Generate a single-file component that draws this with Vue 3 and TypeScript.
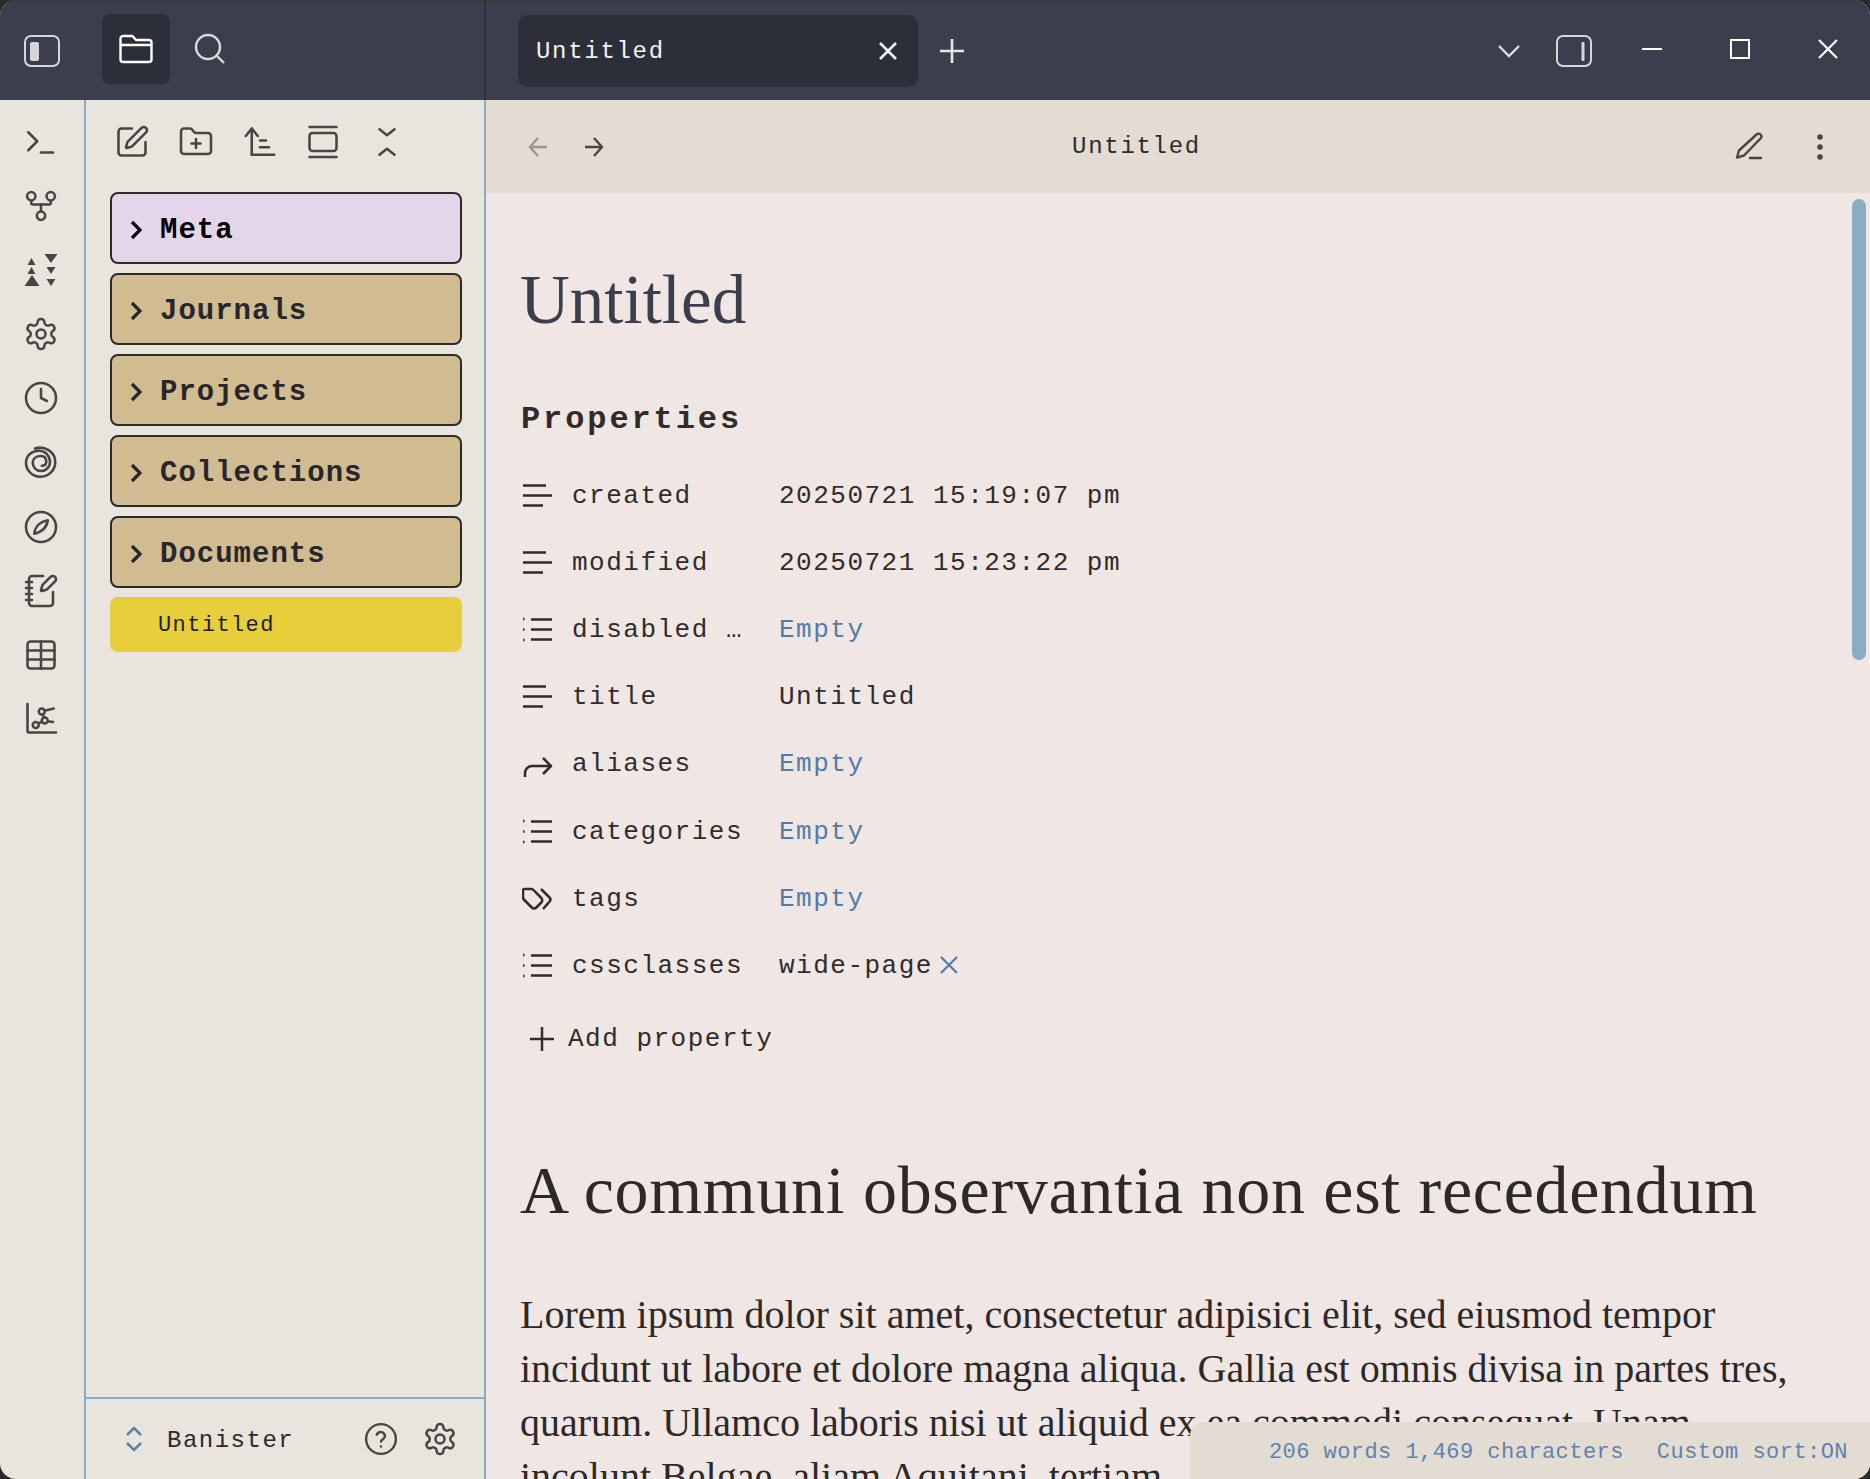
<script setup lang="ts">
const c = (x: number, y: number, r: number) => `M${x - r} ${y}a${r} ${r} 0 1 0 ${2 * r} 0a${r} ${r} 0 1 0 ${-2 * r} 0`
const gear = 'M12.22 2h-.44a2 2 0 0 0-2 2v.18a2 2 0 0 1-1 1.73l-.43.25a2 2 0 0 1-2 0l-.15-.08a2 2 0 0 0-2.73.73l-.22.38a2 2 0 0 0 .73 2.73l.15.1a2 2 0 0 1 1 1.72v.51a2 2 0 0 1-1 1.74l-.15.09a2 2 0 0 0-.73 2.73l.22.38a2 2 0 0 0 2.73.73l.15-.08a2 2 0 0 1 2 0l.43.25a2 2 0 0 1 1 1.73V20a2 2 0 0 0 2 2h.44a2 2 0 0 0 2-2v-.18a2 2 0 0 1 1-1.73l.43-.25a2 2 0 0 1 2 0l.15.08a2 2 0 0 0 2.73-.73l.22-.39a2 2 0 0 0-.73-2.73l-.15-.08a2 2 0 0 1-1-1.74v-.5a2 2 0 0 1 1-1.74l.15-.09a2 2 0 0 0 .73-2.73l-.22-.38a2 2 0 0 0-2.73-.73l-.15.08a2 2 0 0 1-2 0l-.43-.25a2 2 0 0 1-1-1.73V4a2 2 0 0 0-2-2z'

const ribbon: string[][] = [
  ['M3.500 17.500l6-6-6-6', 'M12 19h8'],
  [c(12, 18.500, 2.800), c(5.500, 5.500, 2.800), c(18.500, 5.500, 2.800), 'M18.500 8.500v1.500c0 .6-.4 1-1 1h-11c-.6 0-1-.4-1-1V8.500', 'M12 11v4.500'],
  [],
  [gear, c(12, 12, 3)],
  [c(12, 12, 10), 'M12 6v6l4 2'],
  ['M8 3C14 1 21.500 5 21.500 12c0 5.500-4.300 9.800-9.800 9.800S2 17.500 2 12.500C2 7.500 6 4.500 10.500 4.500c4.500 0 7.500 3.500 7.500 7.500 0 3.500-2.800 6-6 6s-5.500-2.500-5.500-5.500S9 8 12 8s3.500 2 3.500 4-1.500 2.500-3 2.500'],
  [c(12, 12, 10), 'M16.500 7.500c-.5 4-2.500 7.500-9 9 .5-4.500 2.500-7.500 9-9z'],
  ['M13.400 2H6a2 2 0 0 0-2 2v16a2 2 0 0 0 2 2h12a2 2 0 0 0 2-2v-7.400', 'M2 6h4', 'M2 10h4', 'M2 14h4', 'M2 18h4', 'M21.378 5.626a1 1 0 1 0-3.004-3.004l-5.010 5.012a2 2 0 0 0-.506.854l-.837 2.870a.5.5 0 0 0 .620.620l2.870-.837a2 2 0 0 0 .854-.506z'],
  ['M5 3h14a2 2 0 0 1 2 2v14a2 2 0 0 1-2 2H5a2 2 0 0 1-2-2V5a2 2 0 0 1 2-2z', 'M3 9h18', 'M3 15h18', 'M12 3v18'],
  ['M3 2v18a1 1 0 0 0 1 1h18', c(8.500, 16, 2), c(14.500, 13, 2), c(12.500, 7, 2), 'M10.300 15l2.400-1.200', 'M13.300 8.800l.6 2.300', 'M14.500 6.500l6-1.500', 'M16.500 13.500l3.500.5'],
]
const tools: string[][] = [
  ['M12 3H5a2 2 0 0 0-2 2v14a2 2 0 0 0 2 2h14a2 2 0 0 0 2-2v-7', 'M18.375 2.625a1 1 0 0 1 3 3l-9.013 9.014a2 2 0 0 1-.853.505l-2.873.840a.5.5 0 0 1-.620-.620l.840-2.873a2 2 0 0 1 .506-.852z'],
  ['M12 10v6', 'M9 13h6', 'M20 20a2 2 0 0 0 2-2V8a2 2 0 0 0-2-2h-7.900a2 2 0 0 1-1.690-.9L9.600 3.900A2 2 0 0 0 7.930 3H4a2 2 0 0 0-2 2v13a2 2 0 0 0 2 2Z'],
  ['M6.500 20.500V3', 'M2.500 8l4-5 4 5', 'M12 11h4', 'M12 15.500h6', 'M6.500 20.500H21.500'],
  ['M5 6h14a2 2 0 0 1 2 2v8a2 2 0 0 1-2 2H5a2 2 0 0 1-2-2V8a2 2 0 0 1 2-2z', 'M3 2h18', 'M3 22h18'],
  ['m7 20.500 5-4 5 4', 'm7 3.500 5 4 5-4'],
]
const folders = [
  { name: 'Meta', meta: true },
  { name: 'Journals', meta: false },
  { name: 'Projects', meta: false },
  { name: 'Collections', meta: false },
  { name: 'Documents', meta: false },
]
const propIcons: Record<string, string[]> = {
  text: ['M1 3.500h23', 'M1 13.500h29', 'M1 23.500h20'],
  list: ['M9 3.500h21', 'M9 13.500h21', 'M9 23.500h21', 'M1 3h1.500', 'M1 13.500h1.500', 'M1 24h1.500'],
  alias: ['M3 27v-4a7 7 0 0 1 7-7h18', 'M21 8l8 8-8 8'],
  tags: ['m19 4 8.500 8.500a3 3 0 0 1 0 4.200L21 24', 'M11.500 5A3 3 0 0 0 9.500 4H2.500a1.500 1.500 0 0 0-1.500 1.500v7a3 3 0 0 0 .8 2l8 8a3.200 3.200 0 0 0 4.500 0l5-5a3.200 3.200 0 0 0 0-4.500z', 'M7 9.500h.1'],
}
const props = [
  { icon: 'text', key: 'created', value: '20250721 15:19:07 pm' },
  { icon: 'text', key: 'modified', value: '20250721 15:23:22 pm' },
  { icon: 'list', key: 'disabled …', value: 'Empty', empty: true },
  { icon: 'text', key: 'title', value: 'Untitled' },
  { icon: 'alias', key: 'aliases', value: 'Empty', empty: true },
  { icon: 'list', key: 'categories', value: 'Empty', empty: true },
  { icon: 'tags', key: 'tags', value: 'Empty', empty: true },
  { icon: 'list', key: 'cssclasses', value: 'wide-page', pill: true },
]
</script>

<template>
  <div class="app">
    <header class="titlebar">
      <div class="tb-left">
        <svg class="tb-toggle" width="36" height="32" viewBox="0 0 36 32"><rect x="1" y="1" width="34" height="30" rx="6" fill="none" stroke="#d6d6d8" stroke-width="2"/><rect x="6" y="7" width="9" height="19" rx="2" fill="#d6d6d8"/></svg>
        <div class="tb-active">
          <svg width="34" height="30" viewBox="0 0 34 30" fill="none" stroke="#fff" stroke-width="2.400" stroke-linejoin="round"><path d="M1.500 11h31M4 28h26a2.500 2.500 0 0 0 2.500-2.500v-17A2.500 2.500 0 0 0 30 6H17l-3.500-4H4A2.500 2.500 0 0 0 1.500 4.500v21A2.500 2.500 0 0 0 4 28z"/></svg>
        </div>
        <svg class="tb-search" width="32" height="32" viewBox="0 0 32 32" fill="none" stroke="#dcdcde" stroke-width="2.400"><circle cx="14" cy="14" r="12"/><path d="M23 23l7 7"/></svg>
      </div>
      <div class="tab">
        <span>Untitled</span>
        <svg width="20" height="20" viewBox="0 0 20 20" stroke="#f2f2ee" stroke-width="2.600"><path d="M2 2l16 16M18 2L2 18"/></svg>
      </div>
      <svg class="tab-add" width="26" height="26" viewBox="0 0 26 26" stroke="#e6e6e6" stroke-width="2.600"><path d="M13 1v24M1 13h24"/></svg>
      <div class="tb-right">
        <svg width="22" height="14" viewBox="0 0 22 14" fill="none" stroke="#dedede" stroke-width="2.400"><path d="M1 2l10 10L21 2"/></svg>
        <svg class="tb-side" width="36" height="32" viewBox="0 0 36 32"><rect x="1" y="1" width="34" height="30" rx="6" fill="none" stroke="#d6d6d8" stroke-width="2"/><rect x="25.500" y="7" width="3" height="19" rx="1" fill="#d6d6d8"/></svg>
        <svg class="w-min" width="20" height="20" viewBox="0 0 20 20" stroke="#fff" stroke-width="2"><path d="M0 10h20"/></svg>
        <svg class="w-max" width="20" height="20" viewBox="0 0 20 20" fill="none" stroke="#fff" stroke-width="2"><path d="M1 1h18v18H1z"/></svg>
        <svg class="w-close" width="20" height="20" viewBox="0 0 20 20" stroke="#fff" stroke-width="2.200"><path d="M1 1l18 18M19 1L1 19"/></svg>
      </div>
    </header>

    <div class="body">
      <nav class="ribbon">
        <template v-for="(icon, i) in ribbon" :key="i">
          <svg v-if="i === 2" class="ribbon-ic" width="36" height="36" viewBox="-1.500 -2 36 36" fill="#4a4543"><path d="M7 4l4 7H3zM7 13l4 7H3zM7.500 21l7.500 11H0zM20 0h13l-6.500 9zM22 13h9l-4.500 7zM22 25h9l-4.500 7z"/></svg>
          <svg v-else class="ribbon-ic" width="36" height="36" viewBox="0 0 24 24" fill="none" stroke="#4a4543" stroke-width="1.700" stroke-linecap="round" stroke-linejoin="round"><path v-for="d in icon" :key="d" :d="d"/></svg>
        </template>
      </nav>

      <aside class="sidebar">
        <div class="tools">
          <svg v-for="(icon, i) in tools" :key="i" width="36" height="36" viewBox="0 0 24 24" fill="none" stroke="#4a4543" stroke-width="1.700" stroke-linecap="round" stroke-linejoin="round"><path v-for="d in icon" :key="d" :d="d"/></svg>
        </div>
        <div class="tree">
          <div v-for="f in folders" :key="f.name" class="folder" :class="{ meta: f.meta }">
            <svg width="12" height="20" viewBox="0 0 12 20" fill="none" stroke="currentColor" stroke-width="3.200"><path d="M2 2l8 8-8 8"/></svg>
            <span>{{ f.name }}</span>
          </div>
          <div class="file"><span>Untitled</span></div>
        </div>
        <footer class="side-foot">
          <svg width="18" height="26" viewBox="0 0 18 26" fill="none" stroke="#5b82ab" stroke-width="2.600"><path d="M2 9l7-7 7 7M2 17l7 7 7-7"/></svg>
          <span class="vault">Banister</span>
          <svg class="help" width="34" height="34" viewBox="0 0 24 24" fill="none" stroke="#4a4543" stroke-width="1.700" stroke-linecap="round"><circle cx="12" cy="12" r="10.500"/><path d="M9 9a3 3 0 0 1 5.800 1c0 2-2.800 2.500-2.800 3.800M12 17.300h.01"/></svg>
          <svg class="gear" width="36" height="36" viewBox="0 0 24 24" fill="none" stroke="#4a4543" stroke-width="1.700"><path :d="gear"/><circle cx="12" cy="12" r="3"/></svg>
        </footer>
      </aside>

      <main class="main">
        <div class="view-head">
          <svg width="20" height="22" viewBox="0 0 20 22" fill="none" stroke="#9b9794" stroke-width="2.400"><path d="M19 11H2M10 2l-8 9 8 9"/></svg>
          <svg class="fwd" width="20" height="22" viewBox="0 0 20 22" fill="none" stroke="#4a4543" stroke-width="2.400"><path d="M1 11h17M10 2l8 9-8 9"/></svg>
          <span class="view-title">Untitled</span>
          <svg class="pen" width="28" height="28" viewBox="0 0 28 28" fill="none" stroke="#4a4543" stroke-width="2.400" stroke-linejoin="round"><path d="M21.500 2.500a2.800 2.800 0 0 1 4 4L9 23.500l-7 2 2-7zM14 26h13"/></svg>
          <svg class="dots" width="6" height="26" viewBox="0 0 6 26" fill="#4a4543"><circle cx="3" cy="3" r="2.800"/><circle cx="3" cy="13" r="2.800"/><circle cx="3" cy="23" r="2.800"/></svg>
        </div>
        <div class="page">
          <h1 class="inline-title">Untitled</h1>
          <h2 class="props-head">Properties</h2>
          <div v-for="p in props" :key="p.key" class="prop">
            <svg class="prop-ic" width="32" height="28" viewBox="0 0 32 28" fill="none" stroke="#2f2c2b" stroke-width="2.500" stroke-linejoin="round"><path v-for="d in propIcons[p.icon]" :key="d" :d="d"/></svg>
            <span class="prop-key">{{ p.key }}</span>
            <span class="prop-val" :class="{ empty: p.empty }">{{ p.value }}</span>
            <svg v-if="p.pill" class="pill-x" width="18" height="18" viewBox="0 0 18 18" stroke="#4f7cab" stroke-width="2.200"><path d="M1 1l16 16M17 1L1 17"/></svg>
          </div>
          <div class="add-prop">
            <svg width="24" height="24" viewBox="0 0 24 24" stroke="#2f2c2b" stroke-width="2.500"><path d="M12 0v24M0 12h24"/></svg>
            <span>Add property</span>
          </div>
          <h1 class="heading">A communi observantia non est recedendum</h1>
          <p class="para">Lorem ipsum dolor sit amet, consectetur adipisici elit, sed eiusmod tempor incidunt ut labore et dolore magna aliqua. Gallia est omnis divisa in partes tres, quarum. Ullamco laboris nisi ut aliquid ex ea commodi consequat. Unam incolunt Belgae, aliam Aquitani, tertiam</p>
        </div>
        <div class="scrollbar"></div>
        <div class="status"><span>206 words 1,469 characters</span><span>Custom sort:ON</span></div>
      </main>
    </div>
  </div>
</template>

<style scoped>
.app {
  width: 1870px;
  height: 1479px;
  overflow: hidden;
  display: flex;
  flex-direction: column;
  background: #e9e4de;
  border-radius: 16px;
  font-family: "Liberation Mono", monospace;
  position: relative;
}
.titlebar {
  height: 100px;
  flex: none;
  box-sizing: border-box;
  border-top: 2px solid #3a3a3a;
  background: #3b3e4d;
  display: flex;
  align-items: center;
  color: #f2f2ee;
}
.tb-left {
  width: 486px;
  height: 100%;
  box-sizing: border-box;
  border-right: 2px solid #2c2f3a;
  display: flex;
  align-items: center;
  padding-left: 24px;
  flex: none;
}
.tb-active {
  width: 68px;
  height: 70px;
  margin-left: 42px;
  margin-top: -4px;
  border-radius: 8px;
  background: #2c2f3a;
  display: flex;
  align-items: center;
  justify-content: center;
}
.tb-search { margin-left: 24px; margin-top: -4px; }
.tab {
  width: 400px;
  height: 72px;
  margin-left: 32px;
  box-sizing: border-box;
  padding: 0 20px 0 18px;
  border-radius: 10px;
  background: #2c2f3a;
  display: flex;
  align-items: center;
  justify-content: space-between;
  font-size: 24px;
  letter-spacing: 1.700px;
}
.tab-add { margin-left: 21px; }
.tb-right {
  margin-left: auto;
  display: flex;
  align-items: center;
  padding-right: 32px;
}
.tb-side { margin-left: 36px; }
.w-min { margin-left: 50px; margin-top: -4px; }
.w-max { margin-left: 68px; margin-top: -4px; }
.w-close { margin-left: 68px; margin-top: -4px; }
.body { flex: 1; display: flex; min-height: 0; }
.ribbon {
  width: 86px;
  flex: none;
  box-sizing: border-box;
  border-right: 2px solid #86adc4;
  padding: 24px 2px 0 0;
  display: flex;
  flex-direction: column;
  align-items: center;
  gap: 28.100px;
}
.sidebar {
  width: 400px;
  flex: none;
  box-sizing: border-box;
  border-right: 2px solid #86adc4;
  display: flex;
  flex-direction: column;
}
.tools {
  display: flex;
  gap: 27.800px;
  padding: 24px 0 0 28px;
  box-sizing: border-box;
  height: 92px;
}
.tree {
  flex: 1;
  padding: 0 22px 0 24px;
  display: flex;
  flex-direction: column;
  gap: 9px;
}
.folder {
  height: 72px;
  box-sizing: border-box;
  border: 2px solid #2b2b2b;
  border-radius: 8px;
  background: #d1bb91;
  display: flex;
  align-items: center;
  padding: 3px 0 0 18px;
  gap: 18px;
  font-size: 29px;
  font-weight: 700;
  letter-spacing: 1px;
  color: #26262c;
}
.folder span { margin-top: 1px; }
.folder.meta { background: #e5d5ea; color: #000; }
.file {
  height: 55px;
  border-radius: 8px;
  background: #e6cf3b;
  display: flex;
  align-items: center;
  padding-left: 48px;
  font-size: 22px;
  letter-spacing: 1.400px;
  color: #1d1d1d;
}
.file span { margin-top: 2px; }
.side-foot {
  height: 82px;
  flex: none;
  box-sizing: border-box;
  border-top: 2px solid #86adc4;
  display: flex;
  align-items: center;
  padding-left: 39px;
  color: #2a2a2a;
}
.vault {
  margin-left: 24px;
  margin-top: 2px;
  font-size: 24px;
  letter-spacing: 1.500px;
  flex: 1;
}
.help { margin-right: 24px; }
.gear { margin-right: 26px; }
.main {
  flex: 1;
  min-width: 0;
  position: relative;
  background: #f0e7e4;
  display: flex;
  flex-direction: column;
}
.view-head {
  height: 93px;
  flex: none;
  background: #e3dcd2;
  display: flex;
  align-items: center;
  padding: 0 47px 0 42px;
  color: #2f2c2b;
}
.fwd { margin-left: 36px; }
.view-title {
  flex: 1;
  text-align: center;
  padding-right: 66px;
  font-size: 24px;
  letter-spacing: 1.700px;
}
.pen { margin-top: -2px; }
.dots { margin-left: 54px; }
.page {
  flex: 1;
  min-height: 0;
  overflow: hidden;
  padding: 0 60px 0 35px;
}
.inline-title {
  margin: 67px 0 0 -1px;
  font-family: "Liberation Serif", serif;
  font-weight: 400;
  font-size: 69px;
  line-height: 80px;
  color: #3b3e4d;
}
.props-head {
  margin: 60px 0 22px;
  font-size: 32px;
  line-height: 40px;
  font-weight: 700;
  letter-spacing: 2.900px;
  color: #2f2c2b;
}
.prop {
  height: 67.200px;
  display: flex;
  align-items: center;
  font-size: 26px;
  letter-spacing: 1.500px;
  color: #2f2c2b;
}
.prop-ic { flex: none; margin-left: 1px; }
.prop-key { width: 207px; margin-left: 18px; flex: none; }
.prop-val.empty { color: #4f7cab; }
.pill-x { margin-left: 7px; margin-top: -2px; }
.add-prop {
  display: flex;
  align-items: center;
  gap: 14px;
  margin-top: 24px;
  padding-left: 9px;
  font-size: 26px;
  letter-spacing: 1.500px;
  color: #2f2c2b;
}
.heading {
  margin: 98px 0 0 -1px;
  font-family: "Liberation Serif", serif;
  font-weight: 400;
  font-size: 68px;
  letter-spacing: 0.680px;
  line-height: 76px;
  color: #2c2928;
  white-space: nowrap;
}
.para {
  margin: 60px 0 0 -1px;
  font-family: "Liberation Serif", serif;
  font-size: 40px;
  line-height: 54px;
  color: #2c2928;
}
.scrollbar {
  position: absolute;
  right: 4px;
  top: 99px;
  width: 14px;
  height: 461px;
  border-radius: 7px;
  background: #89adc2;
}
.status {
  position: absolute;
  right: 0;
  bottom: 0;
  width: 680px;
  height: 57px;
  box-sizing: border-box;
  border-top-left-radius: 14px;
  background: #e3dcd2;
  display: flex;
  justify-content: flex-end;
  align-items: center;
  gap: 33px;
  padding: 4px 22px 0 0;
  font-size: 22px;
  letter-spacing: 0.450px;
  color: #5f83ad;
}
</style>

<style>
html, body { margin: 0; background: #2b2b2b; }
</style>
